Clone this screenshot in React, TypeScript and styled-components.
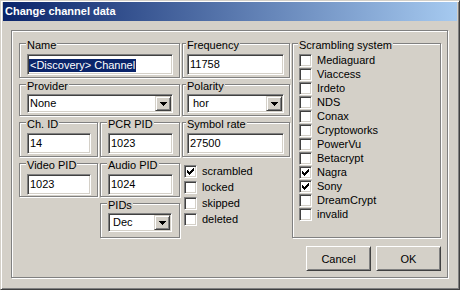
import React from "react";
import styled, { createGlobalStyle } from "styled-components";

const GlobalStyle = createGlobalStyle`
  html, body {
    margin: 0;
    padding: 0;
    background: #d4d0c8;
  }
  body {
    font-family: "Liberation Sans", Arial, sans-serif;
    font-size: 11px;
    color: #000;
  }
  * {
    box-sizing: border-box;
  }
`;

const Window = styled.div`
  width: 460px;
  height: 290px;
  display: flex;
  flex-direction: column;
  padding: 1px 2px 2px 2px;
  background: #d4d0c8;
  border: 1px solid;
  border-color: #d4d0c8 #404040 #404040 #d4d0c8;
  box-shadow: inset 1px 1px 0 #fff, inset -1px -1px 0 #808080;
`;

const TitleBar = styled.div`
  flex: none;
  height: 19px;
  line-height: 19px;
  padding-left: 2px;
  background: linear-gradient(to right, #0a246a, #a6caf0);
  color: #fff;
  font-weight: bold;
  font-size: 11px;
  white-space: nowrap;
`;

const Frame = styled.div`
  flex: 1;
  margin: 9px 9px 9px 8px;
  padding: 6px 0 0 7px;
  border: 1px solid #808080;
  box-shadow: 1px 1px 0 #fff, inset 1px 1px 0 #fff;
  display: grid;
  grid-template-columns: 79px 80px 108px 149px;
  grid-template-rows: 41px 38px 41px 40px 41px auto;
  grid-template-areas:
    "name name freq scr"
    "prov prov pol scr"
    "chid pcr sym scr"
    "vid aud chk scr"
    ". pids chk scr"
    "btn btn btn btn";
  column-gap: 2px;
  align-content: start;
`;

const Group = styled.div<{ $area: string; $padL?: number; $padR?: number }>`
  grid-area: ${(p) => p.$area};
  margin-top: 6px;
  border: 1px solid #808080;
  box-shadow: 1px 1px 0 #fff, inset 1px 1px 0 #fff;
  display: flex;
  flex-direction: column;
  padding: 0 ${(p) => p.$padR ?? 6}px 0 ${(p) => p.$padL ?? 7}px;
`;

const Caption = styled.span`
  align-self: flex-start;
  margin: -5px 0 0 -1px;
  padding: 0 1px;
  height: 12px;
  line-height: 12px;
  background: #d4d0c8;
  white-space: nowrap;
`;

const TextBox = styled.div`
  height: 21px;
  margin-top: 3px;
  padding-left: 2px;
  background: #fff;
  border: 1px solid;
  border-color: #808080 #fff #fff #808080;
  box-shadow: inset 1px 1px 0 #404040, inset -1px -1px 0 #d4d0c8;
  line-height: 19px;
  white-space: nowrap;
  overflow: hidden;
`;

const Selected = styled.span`
  display: inline-block;
  height: 13px;
  line-height: 13px;
  vertical-align: middle;
  margin-left: -1px;
  padding: 0 1px;
  background: #0a246a;
  color: #fff;
`;

const Combo = styled.div<{ $w?: number }>`
  display: flex;
  height: 19px;
  width: ${(p) => (p.$w ? `${p.$w}px` : "auto")};
  margin-top: 2px;
  padding: 1px;
  background: #fff;
  border: 1px solid;
  border-color: #808080 #fff #fff #808080;
  box-shadow: inset 1px 1px 0 #404040, inset -1px -1px 0 #d4d0c8;
`;

const ComboText = styled.span<{ $indent?: number }>`
  flex: 1;
  padding-left: ${(p) => 1 + (p.$indent ?? 0)}px;
  line-height: 15px;
  white-space: nowrap;
  overflow: hidden;
`;

const DropButton = styled.span`
  flex: none;
  width: 16px;
  display: flex;
  align-items: center;
  justify-content: center;
  background: #d4d0c8;
  border: 1px solid;
  border-color: #d4d0c8 #404040 #404040 #d4d0c8;
  box-shadow: inset 1px 1px 0 #fff, inset -1px -1px 0 #808080;
`;

const CheckList = styled.div<{ $area?: string; $gap: number; $top: number; $left?: number }>`
  ${(p) => (p.$area ? `grid-area: ${p.$area};` : "")}
  display: flex;
  flex-direction: column;
  gap: ${(p) => p.$gap}px;
  padding-top: ${(p) => p.$top}px;
  padding-left: ${(p) => p.$left ?? 0}px;
`;

const CheckRow = styled.label`
  display: flex;
  align-items: center;
  gap: 5px;
  height: 13px;
  line-height: 13px;
  white-space: nowrap;
`;

const CheckBox = styled.span`
  flex: none;
  width: 13px;
  height: 13px;
  display: flex;
  align-items: center;
  justify-content: center;
  background: #fff;
  border: 1px solid;
  border-color: #808080 #fff #fff #808080;
  box-shadow: inset 1px 1px 0 #404040, inset -1px -1px 0 #d4d0c8;
`;

const ButtonRow = styled.div`
  grid-area: btn;
  display: flex;
  justify-content: flex-end;
  gap: 5px;
  margin-top: 8px;
`;

const PushButton = styled.button`
  width: 65px;
  height: 25px;
  padding: 0;
  font: inherit;
  color: #000;
  background: #d4d0c8;
  border: 1px solid;
  border-color: #fff #404040 #404040 #fff;
  box-shadow: inset 1px 1px 0 #d4d0c8, inset -1px -1px 0 #808080;
`;

const Arrow = () => (
  <svg width="7" height="4" viewBox="0 0 7 4" shapeRendering="crispEdges">
    <path d="M0 0h7v1H0z M1 1h5v1H1z M2 2h3v1H2z M3 3h1v1H3z" fill="#000" />
  </svg>
);

const Tick = () => (
  <svg width="7" height="7" viewBox="0 0 7 7" shapeRendering="crispEdges">
    <path
      d="M0 2h1v3H0z M1 3h1v3H1z M2 4h1v3H2z M3 3h1v3H3z M4 2h1v3H4z M5 1h1v3H5z M6 0h1v3H6z"
      fill="#000"
    />
  </svg>
);

function Check({ label, checked }: { label: string; checked?: boolean }) {
  return (
    <CheckRow>
      <CheckBox>{checked && <Tick />}</CheckBox>
      {label}
    </CheckRow>
  );
}

function Select({ value, indent, w }: { value: string; indent?: number; w?: number }) {
  return (
    <Combo $w={w}>
      <ComboText $indent={indent}>{value}</ComboText>
      <DropButton>
        <Arrow />
      </DropButton>
    </Combo>
  );
}

const systems: [string, boolean][] = [
  ["Mediaguard", false],
  ["Viaccess", false],
  ["Irdeto", false],
  ["NDS", false],
  ["Conax", false],
  ["Cryptoworks", false],
  ["PowerVu", false],
  ["Betacrypt", false],
  ["Nagra", true],
  ["Sony", true],
  ["DreamCrypt", false],
  ["invalid", false],
];

export default function App() {
  return (
    <>
      <GlobalStyle />
      <Window>
        <TitleBar>Change channel data</TitleBar>
        <Frame>
          <Group $area="name">
            <Caption>Name</Caption>
            <TextBox>
              <Selected>&lt;Discovery&gt; Channel</Selected>
            </TextBox>
          </Group>
          <Group $area="freq" $padL={4} $padR={5}>
            <Caption>Frequency</Caption>
            <TextBox>11758</TextBox>
          </Group>

          <Group $area="prov">
            <Caption>Provider</Caption>
            <Select value="None" />
          </Group>
          <Group $area="pol" $padL={4} $padR={5}>
            <Caption>Polarity</Caption>
            <Select value="hor" indent={3} />
          </Group>

          <Group $area="chid">
            <Caption>Ch. ID</Caption>
            <TextBox>14</TextBox>
          </Group>
          <Group $area="pcr">
            <Caption>PCR PID</Caption>
            <TextBox>1023</TextBox>
          </Group>
          <Group $area="sym" $padL={4} $padR={5}>
            <Caption>Symbol rate</Caption>
            <TextBox>27500</TextBox>
          </Group>

          <Group $area="vid">
            <Caption>Video PID</Caption>
            <TextBox>1023</TextBox>
          </Group>
          <Group $area="aud">
            <Caption>Audio PID</Caption>
            <TextBox>1024</TextBox>
          </Group>
          <Group $area="pids">
            <Caption>PIDs</Caption>
            <Select value="Dec" indent={2} w={64} />
          </Group>

          <CheckList $area="chk" $gap={3} $top={8} $left={2}>
            <Check label="scrambled" checked />
            <Check label="locked" />
            <Check label="skipped" />
            <Check label="deleted" />
          </CheckList>

          <Group $area="scr" $padL={6}>
            <Caption>Scrambling system</Caption>
            <CheckList $gap={1} $top={3}>
              {systems.map(([name, on]) => (
                <Check key={name} label={name} checked={on} />
              ))}
            </CheckList>
          </Group>

          <ButtonRow>
            <PushButton>Cancel</PushButton>
            <PushButton>OK</PushButton>
          </ButtonRow>
        </Frame>
      </Window>
    </>
  );
}
